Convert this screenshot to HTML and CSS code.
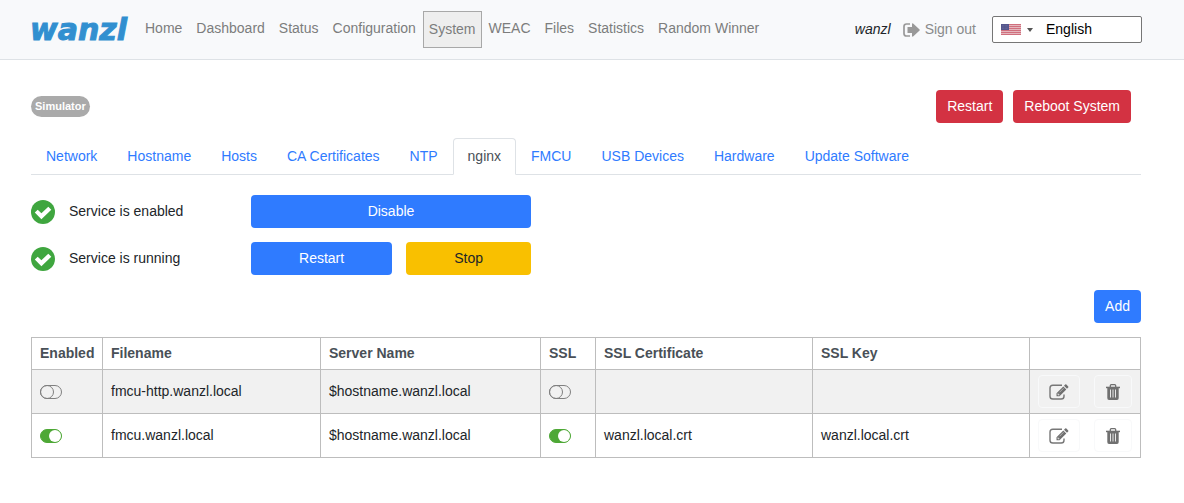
FILE: index.html
```html
<!DOCTYPE html>
<html lang="en">
<head>
<meta charset="utf-8">
<meta name="viewport" content="width=device-width, initial-scale=1">
<title>wanzl – nginx</title>
<link rel="stylesheet" href="styles.css">
</head>
<body>
<svg class="sprite" aria-hidden="true">
  <symbol id="check" viewBox="0 0 24 24">
    <circle cx="12" cy="12" r="12" fill="#3fa63f"/>
    <path d="M3.800 12.600 6.700 9.700 10.400 13.200 17.300 6.700 20.300 9.700 10.400 19.200z" fill="#fff"/>
  </symbol>
  <symbol id="edit" viewBox="0 0 20 16">
    <path d="M13 1.200H3.800Q1 1.200 1 4v8.200Q1 15 3.800 15h8.400Q15 15 15 12.200V10.500" fill="none" stroke="#777" stroke-width="1.400"/>
    <path d="M7.500 9.300 14.300 2.500 17.300 5.500 10.500 12.300H7.500z M15 1.800 16.200.600Q16.800 0 17.400.600L19.200 2.400Q19.800 3 19.200 3.600L18 4.800z" fill="#707070"/>
    <path d="M9 9.500v1.300h1.400" fill="none" stroke="#fff" stroke-width=".8"/>
    <path d="M10.500 8.300 14.500 4.300" fill="none" stroke="#ddd" stroke-width=".6"/>
  </symbol>
  <symbol id="trash" viewBox="0 0 14 16">
    <path d="M4.300 3V1.700Q4.300.700 5.300.700h3.400q1 0 1 1V3" fill="none" stroke="#707070" stroke-width="1.300"/>
    <path d="M0 2.700h14v1.500H0z" fill="#707070"/>
    <path d="M1.300 4h11.400v10Q12.700 16 11 16H3Q1.300 16 1.300 14z" fill="#707070"/>
    <path d="M4.500 5.500v8M7 5.500v8M9.500 5.500v8" stroke="#e8e8e8" stroke-width="1"/>
  </symbol>
</svg>

<header class="topbar">
  <a class="logo" href="#">wanzl</a>
  <nav class="nav" aria-label="Main">
    <a href="#">Home</a>
    <a href="#">Dashboard</a>
    <a href="#">Status</a>
    <a href="#">Configuration</a>
    <a class="active" href="#">System</a>
    <a href="#">WEAC</a>
    <a href="#">Files</a>
    <a href="#">Statistics</a>
    <a href="#">Random Winner</a>
  </nav>
  <em class="user">wanzl</em>
  <a class="signout" href="#">
    <svg width="17" height="14" viewBox="0 0 17 14" aria-hidden="true">
      <path d="M7 1H3.500Q1 1 1 3.500v7Q1 13 3.500 13H7" fill="none" stroke="#999" stroke-width="1.700"/>
      <path d="M4.500 4H9V.800Q9.500 0 10.400.700L16.600 6.500Q17 7 16.600 7.500L10.400 13.300Q9.500 14 9 13.200V10H4.500z" fill="#999"/>
    </svg>
    Sign out
  </a>
  <div class="language">
    <button class="flag" type="button" aria-label="Choose language">
      <svg width="20" height="11" viewBox="0 0 20 11" aria-hidden="true">
        <path d="M0 0h20v11H0z" fill="#e4b6bd"/>
        <path d="M0 .5h20M0 2.500h20M0 4.500h20M0 6.500h20M0 8.500h20M0 10.500h20" stroke="#d06f7d"/>
        <path d="M0 0h8v6H0z" fill="#55568c"/>
        <path d="M1 1.500h6M1 3h6M1 4.500h6" stroke="#7375a2" stroke-width=".6" stroke-dasharray=".7 .7"/>
      </svg>
      <span class="caret"></span>
    </button>
    <input type="text" value="English" aria-label="Language">
  </div>
</header>

<main class="page">
  <div class="heading">
    <span class="badge">Simulator</span>
    <div class="power">
      <button class="btn danger" type="button">Restart</button>
      <button class="btn danger" type="button">Reboot System</button>
    </div>
  </div>

  <nav class="tabs" aria-label="System">
    <a href="#">Network</a>
    <a href="#">Hostname</a>
    <a href="#">Hosts</a>
    <a href="#">CA Certificates</a>
    <a href="#">NTP</a>
    <a class="active" href="#">nginx</a>
    <a href="#">FMCU</a>
    <a href="#">USB Devices</a>
    <a href="#">Hardware</a>
    <a href="#">Update Software</a>
  </nav>

  <section class="services">
    <div class="service">
      <svg width="24" height="24" aria-hidden="true"><use href="#check"/></svg>
      <span>Service is enabled</span>
      <div class="actions">
        <button class="btn primary" type="button">Disable</button>
      </div>
    </div>
    <div class="service">
      <svg width="24" height="24" aria-hidden="true"><use href="#check"/></svg>
      <span>Service is running</span>
      <div class="actions">
        <button class="btn primary" type="button">Restart</button>
        <button class="btn warning" type="button">Stop</button>
      </div>
    </div>
  </section>

  <div class="toolbar">
    <button class="btn primary" type="button">Add</button>
  </div>

  <table class="sites">
    <colgroup>
      <col class="col-enabled"><col class="col-file"><col class="col-server"><col class="col-ssl"><col><col><col class="col-tools">
    </colgroup>
    <thead>
      <tr><th>Enabled</th><th>Filename</th><th>Server Name</th><th>SSL</th><th>SSL Certificate</th><th>SSL Key</th><th></th></tr>
    </thead>
    <tbody>
      <tr>
        <td><input class="toggle" type="checkbox" aria-label="Enabled"></td>
        <td>fmcu-http.wanzl.local</td>
        <td>$hostname.wanzl.local</td>
        <td><input class="toggle" type="checkbox" aria-label="SSL"></td>
        <td></td>
        <td></td>
        <td>
          <div class="tools">
            <button class="tool" type="button" aria-label="Edit"><svg width="20" height="16"><use href="#edit"/></svg></button>
            <button class="tool" type="button" aria-label="Delete"><svg width="16" height="16"><use href="#trash"/></svg></button>
          </div>
        </td>
      </tr>
      <tr>
        <td><input class="toggle" type="checkbox" aria-label="Enabled" checked></td>
        <td>fmcu.wanzl.local</td>
        <td>$hostname.wanzl.local</td>
        <td><input class="toggle" type="checkbox" aria-label="SSL" checked></td>
        <td>wanzl.local.crt</td>
        <td>wanzl.local.crt</td>
        <td>
          <div class="tools">
            <button class="tool" type="button" aria-label="Edit"><svg width="20" height="16"><use href="#edit"/></svg></button>
            <button class="tool" type="button" aria-label="Delete"><svg width="16" height="16"><use href="#trash"/></svg></button>
          </div>
        </td>
      </tr>
    </tbody>
  </table>
</main>
</body>
</html>
```

FILE: styles.css
```css
*,
*::before {
  box-sizing: border-box;
}

body {
  margin: 0;
  background: #fff;
  color: #212529;
  font: 14px/21px "Liberation Sans", Arial, sans-serif;
}

a {
  color: #2f7bff;
  text-decoration: none;
}

button,
input {
  margin: 0;
  font: inherit;
}

svg {
  display: block;
  flex: none;
}

.sprite {
  display: none;
}

/* Top bar */
.topbar {
  display: flex;
  align-items: center;
  padding: 11px 42px 11px 30px;
  border-bottom: 1px solid #dee2e6;
  background: #f8f9fb;
}

.logo {
  width: 108px;
  color: #318fd0;
  font: italic bold 30px/37px "DejaVu Sans", sans-serif;
  -webkit-text-stroke: 1px #318fd0;
}

.nav {
  display: flex;
  align-items: flex-start;
  flex: 1;
  white-space: nowrap;
}

.nav a {
  padding: 7px;
  color: #7c7d7d;
}

.nav .active {
  padding: 7px 5px;
  border: 1px solid #a8a8a8;
  background: #eee;
}

.user {
  margin-right: 12px;
  color: #212529;
}

.signout {
  display: flex;
  align-items: center;
  gap: 5px;
  margin-right: 16px;
  color: #8a8b8c;
  white-space: nowrap;
}

.language {
  display: flex;
  width: 150px;
  height: 27px;
  border: 1px solid #767676;
  border-radius: 2px;
  background: #fff;
}

.flag {
  display: flex;
  align-items: center;
  gap: 6px;
  padding: 0 8px;
  border: 0;
  background: none;
}

.caret {
  border: 3px solid transparent;
  border-top: 4px solid #555;
  border-bottom: 0;
}

.language input {
  flex: 1;
  min-width: 0;
  padding: 0 5px;
  border: 0;
  background: none;
  color: #000;
}

/* Page */
.page {
  padding: 30px 43px 30px 31px;
}

.heading {
  display: flex;
  align-items: center;
  justify-content: space-between;
  padding-right: 10px;
}

.badge {
  padding: 0 4px;
  border-radius: 11px;
  background: #aaa;
  color: #fff;
  font-size: 11px;
  font-weight: bold;
}

.power {
  display: flex;
  gap: 10px;
}

.btn {
  height: 33px;
  padding: 0 11px;
  border: 0;
  border-radius: 4px;
  color: #fff;
  line-height: 21px;
}

.primary {
  background: #2f7bff;
}

.danger {
  background: #d33242;
}

.warning {
  background: #f9c000;
  color: #212529;
}

/* Tabs */
.tabs {
  display: flex;
  margin-top: 15px;
  border-bottom: 1px solid #dee2e6;
  white-space: nowrap;
}

.tabs a {
  margin-bottom: -1px;
  padding: 7px 14px;
  border: 1px solid transparent;
  border-radius: 4px 4px 0 0;
}

.tabs .active {
  border-color: #dee2e6 #dee2e6 #fff;
  background: #fff;
  color: #495057;
}

/* Service state */
.services {
  display: grid;
  gap: 14px;
  margin-top: 20px;
}

.service {
  display: grid;
  grid-template-columns: 24px 168px 280px;
  column-gap: 14px;
  align-items: center;
}

.actions {
  display: flex;
  gap: 14px;
}

.actions .btn {
  flex: 1 1 auto;
}

.toolbar {
  display: flex;
  justify-content: flex-end;
  margin: 15px 0 14px;
}

/* Sites */
.sites {
  width: 100%;
  border-collapse: collapse;
  table-layout: fixed;
}

.col-enabled {
  width: 71px;
}

.col-file {
  width: 218px;
}

.col-server {
  width: 220px;
}

.col-ssl {
  width: 55px;
}

.col-tools {
  width: 111px;
}

.sites th,
.sites td {
  padding: 5px 8px;
  border: 1px solid #bdbdbd;
  text-align: left;
  vertical-align: middle;
}

.sites th {
  color: #495057;
}

.sites tbody tr:nth-child(odd) {
  background: #f1f1f1;
}

.toggle {
  display: block;
  width: 22px;
  height: 14px;
  border: 1px solid #808080;
  border-radius: 7px;
  appearance: none;
}

.toggle::before {
  content: "";
  display: block;
  width: 14px;
  height: 14px;
  margin: -1px;
  border: 1px solid #808080;
  border-radius: 50%;
}

.toggle:checked {
  border-color: #4ea836;
  background: #4ea836;
}

.toggle:checked::before {
  width: 12px;
  height: 12px;
  margin: 0 0 0 auto;
  border: 0;
  background: #fff;
}

.tools {
  display: flex;
  gap: 14px;
}

.tool {
  height: 33px;
  padding: 0 10px;
  border: 1px solid #f8f9fa;
  border-radius: 4px;
  background: none;
}

.tool svg {
  margin: auto;
}
```
